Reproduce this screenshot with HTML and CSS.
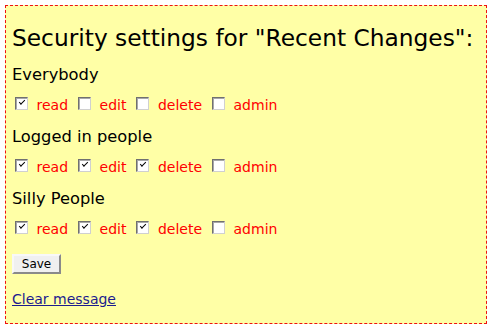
FILE: index.html
```html
<!DOCTYPE html>
<html>
<head>
<meta charset="utf-8">
<title>Security settings</title>
<link rel="stylesheet" href="styles.css">
</head>
<body>
<div class="box">
  <h1 class="title">Security settings for "Recent Changes":</h1>
  <div class="group">
    <div class="group-name">Everybody</div>
    <div class="perms">
      <label class="opt"><input type="checkbox" checked><span>read</span></label>
      <label class="opt"><input type="checkbox"><span>edit</span></label>
      <label class="opt"><input type="checkbox"><span>delete</span></label>
      <label class="opt"><input type="checkbox"><span>admin</span></label>
    </div>
  </div>
  <div class="group">
    <div class="group-name">Logged in people</div>
    <div class="perms">
      <label class="opt"><input type="checkbox" checked><span>read</span></label>
      <label class="opt"><input type="checkbox" checked><span>edit</span></label>
      <label class="opt"><input type="checkbox" checked><span>delete</span></label>
      <label class="opt"><input type="checkbox"><span>admin</span></label>
    </div>
  </div>
  <div class="group">
    <div class="group-name">Silly People</div>
    <div class="perms">
      <label class="opt"><input type="checkbox" checked><span>read</span></label>
      <label class="opt"><input type="checkbox" checked><span>edit</span></label>
      <label class="opt"><input type="checkbox" checked><span>delete</span></label>
      <label class="opt"><input type="checkbox"><span>admin</span></label>
    </div>
  </div>
  <div class="actions">
    <button class="save" type="button">Save</button>
  </div>
  <div class="clear"><a href="#">Clear message</a></div>
</div>
</body>
</html>
```
FILE: styles.css
```css
html, body {
  margin: 0;
  padding: 0;
  background: #ffffff;
}
body {
  padding: 5px;
  font-family: "DejaVu Sans", Verdana, sans-serif;
  color: #000;
}
.box {
  border: 1px dashed #ee1111;
  background: #ffffa6;
  padding: 0 6px 14px 6px;
}
.title {
  margin: 18px 0 0 0;
  font-size: 23.3px;
  line-height: 28px;
  font-weight: normal;
}
.group-name {
  margin-top: 12px;
  font-size: 16.3px;
  line-height: 20px;
}
.group:first-of-type .group-name {
  margin-top: 13px;
}
.perms {
  margin-top: 10px;
  display: flex;
  align-items: center;
  height: 20px;
  font-size: 14px;
  line-height: 20px;
  color: #ff0000;
}
.opt {
  display: inline-flex;
  align-items: center;
  margin-right: 7px;
}
.opt input {
  -webkit-appearance: none;
  appearance: none;
  position: relative;
  width: 13px;
  height: 13px;
  margin: 0 8.5px 3px 3px;
  box-sizing: border-box;
  background: #ffffff;
  border: 1px solid;
  border-color: #707070 #d0d0d0 #d0d0d0 #707070;
  box-shadow: inset 1px 1px 0 #a8a8a8;
}
.opt input:checked::after {
  content: "";
  position: absolute;
  left: 3px;
  top: 2px;
  width: 5px;
  height: 2px;
  border-left: 1.5px solid #000;
  border-bottom: 1.5px solid #000;
  transform: rotate(-45deg);
}
.actions {
  display: flex;
  margin-top: 15px;
}
.save {
  width: 49px;
  height: 20px;
  padding: 0;
  font-family: "DejaVu Sans", Verdana, sans-serif;
  font-size: 12px;
  color: #000;
  background: #f0f0f0;
  border: 2px solid;
  border-color: #f8f8f8 #8a8a8a #8a8a8a #f8f8f8;
  border-radius: 0;
}
.clear {
  margin-top: 15px;
  font-size: 14px;
  line-height: 20px;
}
.clear a {
  color: #1c1c8e;
  text-decoration: underline;
}
```
